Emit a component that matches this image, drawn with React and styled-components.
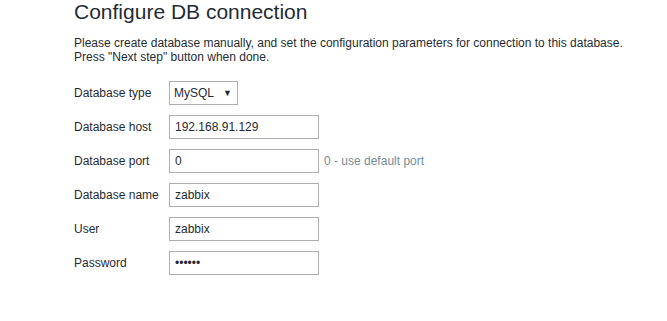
import React from "react";
import styled, { createGlobalStyle } from "styled-components";

const Global = createGlobalStyle`
  html, body { margin: 0; padding: 0; background: #ffffff; }
  body { font-family: "Liberation Sans", Arial, sans-serif; font-size: 12px; color: #1f2c33; }
`;

const Page = styled.div`
  padding-left: 74px;
`;

const Title = styled.h1`
  margin: 0;
  font-size: 21px;
  line-height: 24px;
  font-weight: normal;
  color: #1f2c33;
`;

const Intro = styled.p`
  margin: 12px 0 0;
  font-size: 12px;
  line-height: 14px;
`;

const Form = styled.div`
  margin-top: 17px;
  display: flex;
  flex-direction: column;
  gap: 10px;
`;

const Row = styled.div`
  display: flex;
  align-items: center;
  height: 24px;
`;

const Label = styled.label`
  width: 95px;
  flex: none;
  font-size: 12px;
`;

const Field = styled.input`
  box-sizing: border-box;
  width: 150px;
  height: 24px;
  margin: 0;
  padding: 0 5px;
  border: 1px solid #b0b0b0;
  border-radius: 0;
  background: #fff;
  font-family: "Liberation Sans", Arial, sans-serif;
  font-size: 12px;
  color: #1f2c33;
  outline: none;
`;

const Select = styled.div`
  box-sizing: border-box;
  width: 69px;
  height: 24px;
  border: 1px solid #b0b0b0;
  padding: 0 4px 0 4px;
  display: flex;
  align-items: center;
  justify-content: space-between;
  font-size: 12px;
`;

const Arrow = styled.span`
  font-size: 9px;
  color: #1f2c33;
  margin-right: 1px;
`;

const Hint = styled.span`
  margin-left: 5px;
  color: #768d99;
  font-size: 12px;
`;

const rows = [
  { label: "Database host", value: "192.168.91.129" },
  { label: "Database port", value: "0", hint: "0 - use default port" },
  { label: "Database name", value: "zabbix" },
  { label: "User", value: "zabbix" },
  { label: "Password", value: "zabbix", type: "password" },
];

export default function App() {
  return (
    <Page>
      <Global />
      <Title>Configure DB connection</Title>
      <Intro>
        Please create database manually, and set the configuration parameters for connection to this database.
        <br />
        Press "Next step" button when done.
      </Intro>
      <Form>
        <Row>
          <Label>Database type</Label>
          <Select>
            <span>MySQL</span>
            <Arrow>▼</Arrow>
          </Select>
        </Row>
        {rows.map((r) => (
          <Row key={r.label}>
            <Label>{r.label}</Label>
            <Field type={r.type || "text"} defaultValue={r.value} readOnly />
            {r.hint && <Hint>{r.hint}</Hint>}
          </Row>
        ))}
      </Form>
    </Page>
  );
}
